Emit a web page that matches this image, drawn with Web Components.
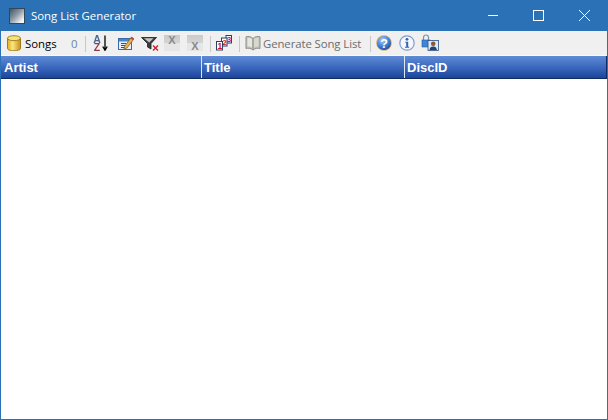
<!DOCTYPE html>
<html>
<head>
<meta charset="utf-8">
<title>Song List Generator</title>
<style>
  html, body { margin: 0; height: 100%; background: #fff; }
</style>
</head>
<body>
<song-window>
  <title-bar slot="title">Song List Generator</title-bar>
  <tool-bar slot="tools">
    <tool-icon style="margin-left:5px">
      <svg viewBox="0 0 16 16"><defs><linearGradient id="cy" x1="0" x2="1" y1="0" y2="0"><stop offset="0" stop-color="#e3ae22"/><stop offset=".4" stop-color="#fbe680"/><stop offset="1" stop-color="#c98f12"/></linearGradient></defs><path d="M1.500 3.200v10.300c0 1.300 2.800 2.200 6.500 2.200s6.500-.9 6.500-2.200V3.200z" fill="url(#cy)" stroke="#8c6a12" stroke-width=".8"/><ellipse cx="8" cy="3.200" rx="6.500" ry="2.500" fill="#f8e27a" stroke="#8c6a12" stroke-width=".8"/></svg>
    </tool-icon>
    <tool-label style="margin-left:3px;width:32px;color:#000">Songs</tool-label>
    <tool-label style="margin-left:14px;width:7px;color:#6a83a8">0</tool-label>
    <tool-sep style="margin-left:7px"></tool-sep>
    <sort-icon style="margin-left:6px"></sort-icon>
    <tool-icon style="margin-left:10px">
      <svg viewBox="0 0 16 16"><rect x=".5" y="3.500" width="13" height="11" fill="#e6eef9" stroke="#3a6aa8"/><rect x="1" y="4" width="12" height="2.500" fill="#4d84c8"/><path d="M3 8.500h5M3 10.500h4M3 12.500h5" stroke="#31507f"/><path d="M6.500 11.500L13.500 2 16 3.800 9 13l-3 1z" fill="#eab04e" stroke="#7a5420" stroke-width=".7"/><path d="M13.500 2L16 3.800 15 5.200 12.500 3.400z" fill="#c8443a"/></svg>
    </tool-icon>
    <tool-icon style="margin-left:7px;width:18px">
      <svg viewBox="0 0 18 16"><path d="M.5 2.500h15L10 8.500v5.500l-3.500-2V8.500z" fill="#3c3c3c" stroke="#1c1c1c" stroke-width=".8"/><path d="M3 3.200h9.500L8.200 7.500z" fill="#c8c8c8"/><path d="M12 10.500l5 5M17 10.500l-5 5" stroke="#d01818" stroke-width="1.300"/></svg>
    </tool-icon>
    <tool-icon style="margin-left:5px"><dim-cell pos="top"></dim-cell></tool-icon>
    <tool-icon style="margin-left:7px"><dim-cell pos="bottom"></dim-cell></tool-icon>
    <tool-sep style="margin-left:7px"></tool-sep>
    <tool-icon style="margin-left:5px">
      <svg viewBox="0 0 16 16"><rect x="10" y=".5" width="5.500" height="7.500" fill="#fff" stroke="#2c3e6e"/><rect x="5.500" y="3" width="5.500" height="8" fill="#fff" stroke="#2c3e6e"/><rect x=".5" y="6.500" width="6" height="8.500" fill="#fff" stroke="#2c3e6e"/><text x="1.500" y="14" font-family="Liberation Sans, sans-serif" font-size="8.500" font-weight="bold" fill="#c01818">1</text><text x="6.500" y="9.500" font-family="Liberation Sans, sans-serif" font-size="7.500" font-weight="bold" fill="#c01818">2</text><text x="11" y="6.800" font-family="Liberation Sans, sans-serif" font-size="7.500" font-weight="bold" fill="#c01818">3</text></svg>
    </tool-icon>
    <tool-sep style="margin-left:7px"></tool-sep>
    <tool-icon style="margin-left:5px">
      <svg viewBox="0 0 16 16"><path d="M8 3.500C6 1.500 3 1 1 1.800V13.500c2-.6 5-.4 7 1.500 2-1.900 5-2.100 7-1.500V1.800C13 1 10 1.500 8 3.500z" fill="#c4c4bc" stroke="#8e8e88"/><path d="M8 3.500V15" stroke="#8e8e88"/><path d="M2.500 3c1.800-.3 3.500 0 4.500 1.300v8.200c-1-.9-2.800-1.300-4.500-1z" fill="#e6e6e0"/><path d="M13.500 3c-1.800-.3-3.500 0-4.500 1.300v8.200c1-.9 2.800-1.300 4.500-1z" fill="#d8d8d0"/></svg>
    </tool-icon>
    <tool-label style="margin-left:2px;width:98px;color:#6d6d6d;letter-spacing:-.1px">Generate Song List</tool-label>
    <tool-sep style="margin-left:9px"></tool-sep>
    <tool-icon style="margin-left:5px">
      <svg viewBox="0 0 16 16"><defs><radialGradient id="hb" cx=".4" cy=".3" r=".8"><stop offset="0" stop-color="#a8d2f6"/><stop offset=".6" stop-color="#3a7ad4"/><stop offset="1" stop-color="#1c3f8e"/></radialGradient></defs><circle cx="8" cy="8" r="7.800" fill="#d8a860"/><circle cx="8" cy="8" r="7" fill="url(#hb)"/><text x="8" y="12.500" text-anchor="middle" font-family="Liberation Sans, sans-serif" font-size="12.500" font-weight="bold" fill="#fff">?</text></svg>
    </tool-icon>
    <tool-icon style="margin-left:7px">
      <svg viewBox="0 0 16 16"><circle cx="8" cy="8" r="7.200" fill="#f4f7fc" stroke="#7f9ccc" stroke-width="1.200"/><circle cx="8" cy="4.300" r="1.400" fill="#3a62b0"/><path d="M6.300 6.800h2.900v5h1v1H6v-1h1.200V7.800h-.9z" fill="#3a62b0"/></svg>
    </tool-icon>
    <tool-icon style="margin-left:6px;width:18px">
      <svg viewBox="0 0 18 17" style="margin-top:-1px"><path d="M2.500 6V3.500a2.500 2.500 0 0 1 5 0V6" fill="none" stroke="#7f93ac" stroke-width="1.200"/><rect x="1" y="6" width="8" height="7" fill="#3f86d8" stroke="#2a5a9c" stroke-width=".6"/><rect x="7" y="6.500" width="10.500" height="10" fill="#e4eaf2" stroke="#2a4f86" stroke-width=".8"/><circle cx="12.200" cy="9.800" r="2.300" fill="#8a5a34"/><path d="M8.500 16c.4-3 2-3.500 3.700-3.500s3.300.5 3.700 3.500z" fill="#23466e"/></svg>
    </tool-icon>
  </tool-bar>
  <list-header slot="header">
    <col-head style="width:201px">Artist</col-head>
    <col-head style="width:203px;padding-left:2px">Title</col-head>
    <col-head last style="padding-left:2px">DiscID</col-head>
  </list-header>
</song-window>

<script>
// app frame: blue border, title row, toolbar, then empty list
class SongWindow extends HTMLElement {
  connectedCallback() {
    this.attachShadow({ mode: "open" });
    this.shadowRoot.innerHTML = `
      <style>
        :host {
          display: flex;
          flex-direction: column;
          box-sizing: border-box;
          width: 608px;
          height: 420px;
          background: #2b71b5;
          padding: 0 1px 1px 1px;
        }
        .list {
          flex: 1;
          background: #fff;
        }
      </style>
      <slot name="title"></slot>
      <slot name="tools"></slot>
      <slot name="header"></slot>
      <div class="list"></div>
    `;
  }
}

class TitleBar extends HTMLElement {
  connectedCallback() {
    this.attachShadow({ mode: "open" });
    this.shadowRoot.innerHTML = `
      <style>
        :host {
          display: flex;
          align-items: center;
          height: 31px;
          color: #fff;
          font: 11.400px "Open Sans", sans-serif;
        }
        .logo {
          width: 16px;
          height: 16px;
          margin: 0 6px 0 8px;
          box-sizing: border-box;
          border: 1px solid #33465a;
          background: linear-gradient(135deg, #3e5466 0%, #8d9aa5 45%, #f4f4f4 85%);
        }
        .name { flex: 1; }
        .btn {
          width: 46px;
          height: 31px;
          display: flex;
          align-items: center;
          justify-content: center;
        }
        svg { width: 11px; height: 11px; display: block; }
      </style>
      <div class="logo"></div>
      <div class="name"><slot></slot></div>
      <div class="btn"><svg viewBox="0 0 11 11"><path d="M1 5.500h10" stroke="#fff" fill="none"/></svg></div>
      <div class="btn"><svg viewBox="0 0 11 11"><rect x=".5" y=".5" width="10" height="10" stroke="#fff" fill="none"/></svg></div>
      <div class="btn"><svg viewBox="0 0 11 11"><path d="M0 0l11 11M11 0L0 11" stroke="#fff" fill="none"/></svg></div>
    `;
  }
}

class ToolBar extends HTMLElement {
  connectedCallback() {
    this.attachShadow({ mode: "open" });
    this.shadowRoot.innerHTML = `
      <style>
        :host {
          display: flex;
          align-items: center;
          box-sizing: border-box;
          height: 25px;
          background: #f0f0f0;
          border-bottom: 1px solid #f9f9f9;
          font: 11.400px "Open Sans", sans-serif;
        }
      </style>
      <slot></slot>
    `;
  }
}

class ToolIcon extends HTMLElement {
  connectedCallback() {
    this.attachShadow({ mode: "open" });
    this.shadowRoot.innerHTML = `
      <style>
        :host {
          display: block;
          flex: none;
          width: 16px;
          height: 16px;
        }
        ::slotted(svg) { display: block; width: 100%; }
      </style>
      <slot></slot>
    `;
  }
}

// sort button: stacked A/Z in one text run plus the down arrow
class SortIcon extends HTMLElement {
  connectedCallback() {
    this.attachShadow({ mode: "open" });
    this.shadowRoot.innerHTML = `
      <style>
        :host {
          display: flex;
          flex: none;
          width: 16px;
          height: 16px;
        }
        .letters {
          width: 10px;
          height: 16px;
          white-space: pre;
          text-align: center;
          font: bold 10.500px/8px "Liberation Sans", sans-serif;
          color: transparent;
          background: linear-gradient(#4a6596 0, #4a6596 8px, #8f3a44 8px);
          -webkit-background-clip: text;
          background-clip: text;
        }
        svg { width: 6px; height: 16px; display: block; }
      </style>
      <div class="letters">A\nZ</div>
      <svg viewBox="0 0 6 16"><path d="M3 .5v14M.8 11.500L3 15.300l2.200-3.800" fill="none" stroke="#000" stroke-width="1.300"/></svg>
    `;
  }
}

class ToolLabel extends HTMLElement {
  connectedCallback() {
    this.attachShadow({ mode: "open" });
    this.shadowRoot.innerHTML = `
      <style>
        :host { display: block; flex: none; white-space: nowrap; }
      </style>
      <slot></slot>
    `;
  }
}

class ToolSep extends HTMLElement {
  connectedCallback() {
    this.attachShadow({ mode: "open" });
    this.shadowRoot.innerHTML = `
      <style>
        :host {
          display: block;
          flex: none;
          width: 1px;
          height: 16px;
          margin-top: 1px;
          background: #c8c8c8;
        }
      </style>
    `;
  }
}

// disabled grey cell icon with an x in its top or bottom half
class DimCell extends HTMLElement {
  connectedCallback() {
    const top = this.getAttribute("pos") === "top";
    this.attachShadow({ mode: "open" });
    this.shadowRoot.innerHTML = `
      <style>
        :host {
          display: flex;
          justify-content: center;
          align-items: ${top ? "flex-start" : "flex-end"};
          width: 16px;
          height: 16px;
          background: linear-gradient(#cbcbcb 0, #d4d4d4 8px, #e6e6e6 8px);
          color: #8a8a8a;
          font: bold 11px/10px "Liberation Sans", sans-serif;
        }
      </style>
      X
    `;
  }
}

class ListHeader extends HTMLElement {
  connectedCallback() {
    this.attachShadow({ mode: "open" });
    this.shadowRoot.innerHTML = `
      <style>
        :host {
          display: flex;
          height: 23px;
          box-sizing: border-box;
          border-bottom: 1px solid #102a62;
          background: linear-gradient(#5f8bd6 0, #3f6cc0 45%, #1c459c 100%);
        }
      </style>
      <slot></slot>
    `;
  }
}

class ColHead extends HTMLElement {
  connectedCallback() {
    this.attachShadow({ mode: "open" });
    this.shadowRoot.innerHTML = `
      <style>
        :host {
          display: flex;
          align-items: center;
          box-sizing: border-box;
          padding-left: 3px;
          border-right: 1px solid #dfe7f5;
          color: #fff;
          font: bold 13px "Liberation Sans", sans-serif;
        }
        :host([last]) { flex: 1; border-right: 1px solid #102a62; }
      </style>
      <slot></slot>
    `;
  }
}

customElements.define("song-window", SongWindow);
customElements.define("title-bar", TitleBar);
customElements.define("tool-bar", ToolBar);
customElements.define("tool-icon", ToolIcon);
customElements.define("sort-icon", SortIcon);
customElements.define("tool-label", ToolLabel);
customElements.define("tool-sep", ToolSep);
customElements.define("dim-cell", DimCell);
customElements.define("list-header", ListHeader);
customElements.define("col-head", ColHead);
</script>
</body>
</html>
